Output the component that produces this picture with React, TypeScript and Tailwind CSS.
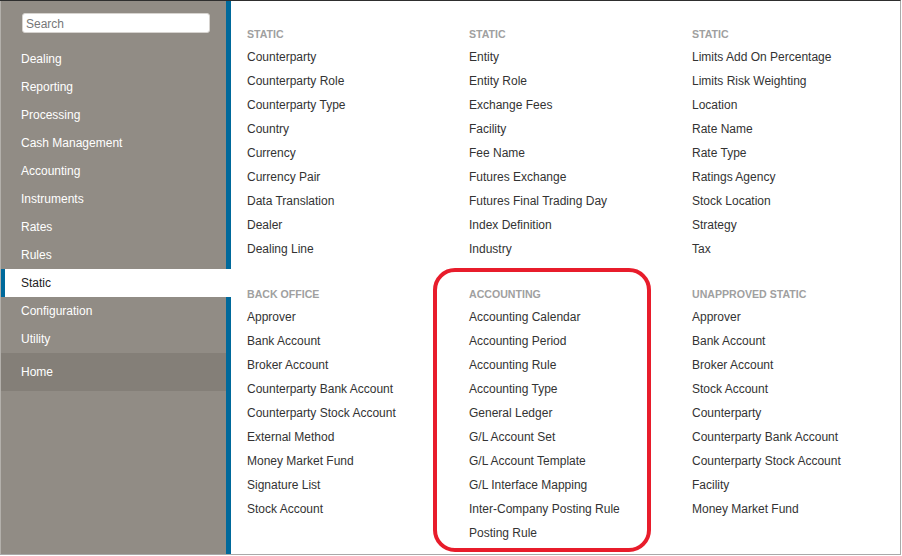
import React from "react";

const navItems = [
  "Dealing",
  "Reporting",
  "Processing",
  "Cash Management",
  "Accounting",
  "Instruments",
  "Rates",
  "Rules",
  "Static",
  "Configuration",
  "Utility",
];

const topSections = [
  {
    title: "STATIC",
    items: [
      "Counterparty",
      "Counterparty Role",
      "Counterparty Type",
      "Country",
      "Currency",
      "Currency Pair",
      "Data Translation",
      "Dealer",
      "Dealing Line",
    ],
  },
  {
    title: "STATIC",
    items: [
      "Entity",
      "Entity Role",
      "Exchange Fees",
      "Facility",
      "Fee Name",
      "Futures Exchange",
      "Futures Final Trading Day",
      "Index Definition",
      "Industry",
    ],
  },
  {
    title: "STATIC",
    items: [
      "Limits Add On Percentage",
      "Limits Risk Weighting",
      "Location",
      "Rate Name",
      "Rate Type",
      "Ratings Agency",
      "Stock Location",
      "Strategy",
      "Tax",
    ],
  },
];

const bottomSections = [
  {
    title: "BACK OFFICE",
    items: [
      "Approver",
      "Bank Account",
      "Broker Account",
      "Counterparty Bank Account",
      "Counterparty Stock Account",
      "External Method",
      "Money Market Fund",
      "Signature List",
      "Stock Account",
    ],
  },
  {
    title: "ACCOUNTING",
    items: [
      "Accounting Calendar",
      "Accounting Period",
      "Accounting Rule",
      "Accounting Type",
      "General Ledger",
      "G/L Account Set",
      "G/L Account Template",
      "G/L Interface Mapping",
      "Inter-Company Posting Rule",
      "Posting Rule",
    ],
  },
  {
    title: "UNAPPROVED STATIC",
    items: [
      "Approver",
      "Bank Account",
      "Broker Account",
      "Stock Account",
      "Counterparty",
      "Counterparty Bank Account",
      "Counterparty Stock Account",
      "Facility",
      "Money Market Fund",
    ],
  },
];

type Section = { title: string; items: string[] };

const MenuColumn = ({ section }: { section: Section }) => (
  <div className="flex flex-col">
    <div className="h-[23px] leading-[25px] text-[10.6px] font-bold text-[#a0a0a0]">
      {section.title}
    </div>
    {section.items.map((item, i) => (
      <div key={i} className="h-[24px] leading-[24px] text-[12px] text-[#333]">
        {item}
      </div>
    ))}
  </div>
);

const Sidebar = () => (
  <aside className="w-[231px] shrink-0 flex flex-col bg-[#918c85] border-r-[5px] border-[#00699b] border-l border-l-[#b3b0ab]">
    <div className="pt-[12px] pl-[21px] pr-[16px] pb-[12px]">
      <input
        placeholder="Search"
        className="block w-[188px] h-[20px] rounded-[3px] bg-white px-[3px] pt-[1px] text-[12px] text-[#333] placeholder:text-[#777] outline-none border border-[#d6d3cf]"
      />
    </div>
    {navItems.map((item) =>
      item === "Static" ? (
        <div
          key={item}
          className="h-[28px] -mr-[5px] flex items-center bg-white border-l-4 border-[#00699b] pl-[16px] text-[12px] text-[#222]"
        >
          {item}
        </div>
      ) : (
        <div key={item} className="h-[28px] flex items-center pl-[20px] text-[12px] text-white">
          {item}
        </div>
      )
    )}
    <div className="h-[38px] flex items-center pl-[20px] bg-[#847f78] text-[12px] text-white">
      Home
    </div>
  </aside>
);

export default function App() {
  return (
    <div className="w-[902px] h-[556px] bg-white font-['Liberation_Sans',Arial,sans-serif]">
      <div className="relative w-[901px] h-[555px] flex border-t border-[#2e2e2e] border-r border-r-[#a9a9a9] border-b border-b-[#a9a9a9]">
        <Sidebar />
        <main className="flex-1 pl-[16px] pt-[21px]">
          <div className="grid grid-cols-[222px_223px_1fr]">
            {topSections.map((s, i) => (
              <MenuColumn key={i} section={s} />
            ))}
          </div>
          <div className="grid grid-cols-[222px_223px_1fr] mt-[21px]">
            {bottomSections.map((s, i) => (
              <MenuColumn key={i} section={s} />
            ))}
          </div>
        </main>
        <div className="absolute left-[433px] top-[267px] w-[218px] h-[284px] border-4 border-[#e81c2b] rounded-[22px] pointer-events-none" />
      </div>
    </div>
  );
}
